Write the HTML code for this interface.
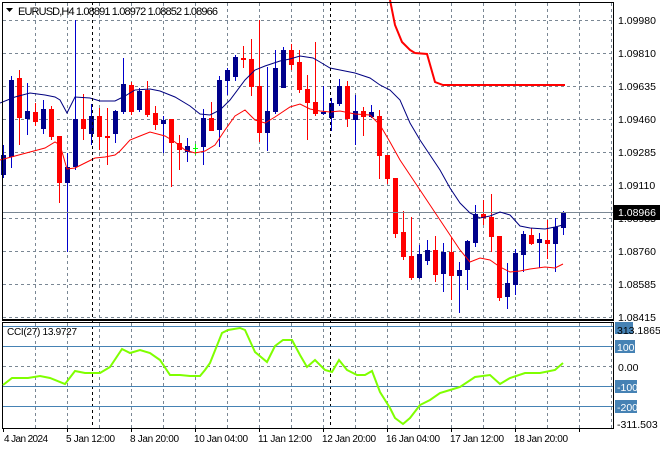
<!DOCTYPE html>
<html><head><meta charset="utf-8"><style>
html,body{margin:0;padding:0;background:#fff;width:660px;height:450px;overflow:hidden}
svg{display:block;font-family:"Liberation Sans",sans-serif}
</style></head><body>
<svg id="s" width="660" height="450" viewBox="0 0 660 450" xmlns="http://www.w3.org/2000/svg">
<rect width="660" height="450" fill="#fff"/>
<g id="grid" stroke="#7a8794" stroke-width="1" stroke-dasharray="3,3" fill="none"></g>
<g id="cand"></g>
<line x1="2" y1="212.5" x2="613" y2="212.5" stroke="#7a8794"/>
<polyline fill="none" stroke="#000080" stroke-width="1" points="0,103 15,97 30,93 45,95 55,97 60,100 67,113 75,97 90,98 100,101 115,101 125,96 135,90 150,89 160,91 175,97 190,106 200,114 210,115 220,110 230,100 245,80 255,70 265,66 280,61 290,59 300,56 313,58 320,62 330,68 340,70 355,73 370,78 380,85 390,90 400,100 410,123 420,140 430,155 440,170 450,188 460,203 470,213 480,218 490,216 500,212 510,215 520,226 530,228 545,229 555,227 563,225"/>
<polyline fill="none" stroke="#ff0000" stroke-width="1" points="0,160 15,156 30,152 45,148 55,142 60,145 67,169 75,168 85,163 95,158 105,157 115,155 120,151 130,140 140,136 150,132 165,136 175,142 185,150 195,153 205,151 215,145 225,130 235,116 245,110 255,120 265,123 275,117 290,107 300,104 310,109 320,111 330,112 340,111 355,114 370,115 380,125 390,142 400,160 410,175 420,190 430,205 440,220 450,235 460,250 470,262 480,258 490,260 500,267 510,272 520,271 530,269 545,267 555,268 563,264"/>
<polyline fill="none" stroke="#ff0000" stroke-width="2" points="390,0 395,25 402,42 410,50 415,53 427,54 435,82 443,85 565,85"/>
<line x1="92.5" y1="2" x2="92.5" y2="428" stroke="#000" stroke-dasharray="3,3"/>
<line x1="330.5" y1="2" x2="330.5" y2="428" stroke="#000" stroke-dasharray="3,3"/>
<rect x="2.5" y="2.5" width="611" height="317" fill="none" stroke="#000"/>
<rect x="2.5" y="322.5" width="611" height="106" fill="none" stroke="#000"/>
<line x1="2" y1="320.5" x2="614" y2="320.5" stroke="#000"/>
<g stroke="#4682b4"><line x1="3" y1="326.5" x2="613" y2="326.5"/><line x1="3" y1="346.5" x2="613" y2="346.5"/><line x1="3" y1="386.5" x2="613" y2="386.5"/><line x1="3" y1="406.5" x2="613" y2="406.5"/></g>
<line x1="3" y1="366.5" x2="613" y2="366.5" stroke="#7a8794" stroke-dasharray="3,3"/>
<polyline fill="none" stroke="#7fff00" stroke-width="2" points="3,385 12,378 28,378 40,376 50,378 65,384 75,371 85,373 100,373 110,367 122,349 130,353 140,350 150,353 160,360 170,375 180,375 190,376 200,376 205,370 210,363 222,333 228,330 240,328 245,330 255,352 267,362 275,346 283,340 292,340 300,355 307,367 315,360 325,370 332,372 339,360 347,370 357,375 365,375 372,371 380,392 390,408 395,418 403,424 410,418 420,405 430,400 440,393 450,390 460,387 475,377 490,375 500,384 510,378 525,373 540,373 555,370 563,363"/>
<polygon points="6,8 13,8 9.5,12" fill="#000"/>
<text x="18" y="15" font-size="11" fill="#000" textLength="200" lengthAdjust="spacing">EURUSD,H4  1.08891 1.08972 1.08852 1.08966</text>
<text x="7" y="335" font-size="10" fill="#000" textLength="70">CCI(27) 13.9727</text>
<g font-size="10.5" fill="#000">
<text x="618" y="24">1.09980</text><text x="618" y="57">1.09810</text><text x="618" y="90">1.09635</text><text x="618" y="123">1.09460</text><text x="618" y="156">1.09285</text><text x="618" y="189">1.09110</text><text x="618" y="222">1.08935</text><text x="618" y="255">1.08760</text><text x="618" y="288">1.08585</text><text x="618" y="321">1.08415</text>
</g>
<rect x="614" y="205" width="46" height="15" fill="#000"/>
<text x="618" y="216" font-size="10.5" fill="#fff">1.08966</text>
<rect x="615" y="322" width="18" height="12" fill="#4682b4"/>
<text x="617" y="334" font-size="10.5" fill="#000">313.1865</text>
<rect x="615" y="340" width="20" height="13" fill="#4682b4"/><text x="617" y="351" font-size="10.5" fill="#fff">100</text>
<text x="618" y="371" font-size="10.5" fill="#000">0.00</text>
<rect x="615" y="380" width="22" height="13" fill="#4682b4"/><text x="617" y="391" font-size="10.5" fill="#fff">-100</text>
<rect x="615" y="400" width="22" height="13" fill="#4682b4"/><text x="617" y="411" font-size="10.5" fill="#fff">-200</text>
<text x="617" y="428" font-size="10.5" fill="#000">-311.503</text>
<g font-size="10" fill="#000">
<text x="4" y="442" textLength="44">4 Jan 2024</text><text x="66" y="442" textLength="49">5 Jan 12:00</text><text x="130" y="442" textLength="49">8 Jan 20:00</text><text x="194" y="442" textLength="54">10 Jan 04:00</text><text x="258" y="442" textLength="54">11 Jan 12:00</text><text x="322" y="442" textLength="54">12 Jan 20:00</text><text x="386" y="442" textLength="54">16 Jan 04:00</text><text x="450" y="442" textLength="54">17 Jan 12:00</text><text x="514" y="442" textLength="54">18 Jan 20:00</text>
</g>
<g id="ticks" stroke="#000"></g>
</svg>
<script>
var NS="http://www.w3.org/2000/svg";
function el(p,t,a){var e=document.createElementNS(NS,t);for(var k in a)e.setAttribute(k,a[k]);p.appendChild(e);}
var g=document.getElementById('grid');
for(var x=35;x<613;x+=32){el(g,'line',{x1:x+.5,y1:3,x2:x+.5,y2:319});el(g,'line',{x1:x+.5,y1:323,x2:x+.5,y2:428});}
for(var y=20;y<=317;y+=33){el(g,'line',{x1:3,y1:y+.5,x2:613,y2:y+.5});}
var tk=document.getElementById('ticks');
for(var x=3;x<613;x+=64){el(tk,'line',{x1:x+.5,y1:428,x2:x+.5,y2:432});}
var d=[[145,155,175,178,'b'],[76,80,157,168,'b'],[70,78,118,145,'r'],[83,111,119,135,'b'],[103,112,122,126,'r'],[100,109,129,134,'b'],[106,109,137,140,'r'],[136,136,183,203,'r'],[153,167,183,252,'b'],[20,119,167,170,'b'],[94,119,129,140,'r'],[104,116,134,145,'b'],[108,116,137,150,'r'],[108,136,138,165,'r'],[110,111,134,143,'b'],[58,84,112,114,'b'],[82,85,112,115,'r'],[88,91,110,112,'b'],[81,90,115,117,'r'],[106,113,125,130,'r'],[116,120,124,153,'b'],[119,119,143,187,'r'],[135,143,150,170,'r'],[138,146,152,162,'b'],[144,148,149,155,'g'],[109,118,147,165,'b'],[102,118,131,131,'r'],[76,80,130,147,'b'],[68,70,81,95,'b'],[55,57,77,81,'b'],[46,58,60,68,'r'],[39,59,87,96,'r'],[20,86,133,142,'r'],[67,111,133,151,'b'],[50,68,112,114,'b'],[47,50,88,88,'b'],[44,50,65,70,'r'],[50,62,90,93,'r'],[75,89,103,140,'r'],[42,102,114,116,'r'],[86,112,114,115,'b'],[98,103,118,131,'b'],[79,86,104,106,'b'],[81,86,119,127,'r'],[95,111,120,145,'b'],[107,111,117,136,'r'],[105,112,117,118,'b'],[110,116,156,179,'r'],[155,155,179,184,'r'],[178,178,234,238,'r'],[211,232,257,260,'r'],[217,256,278,280,'r'],[245,254,278,279,'b'],[240,250,261,265,'b'],[236,250,275,282,'r'],[243,252,274,292,'b'],[237,252,276,300,'r'],[262,270,276,313,'b'],[240,241,270,290,'b'],[205,214,243,247,'b'],[200,214,218,225,'r'],[194,217,237,252,'r'],[236,236,298,301,'r'],[263,283,297,309,'b'],[249,253,285,295,'b'],[231,234,255,272,'b'],[228,235,244,245,'r'],[233,239,243,268,'b'],[220,240,244,259,'r'],[218,227,244,272,'b'],[211,212,228,235,'b']];
var c=document.getElementById('cand');
var col={b:'#0000cd',r:'#ff0000',g:'#00ff00'};
var fill={b:'#00008b',r:'#ff0000',g:'#00ff00'};
d.forEach(function(v,k){var x=3+8*k;var cc=col[v[4]];
el(c,'line',{x1:x+.5,y1:v[0],x2:x+.5,y2:v[3],stroke:cc});
var h=Math.max(1,v[2]-v[1]);
el(c,'rect',{x:x-2,y:v[1],width:5,height:h,fill:fill[v[4]]});
});
</script>
</body></html>
